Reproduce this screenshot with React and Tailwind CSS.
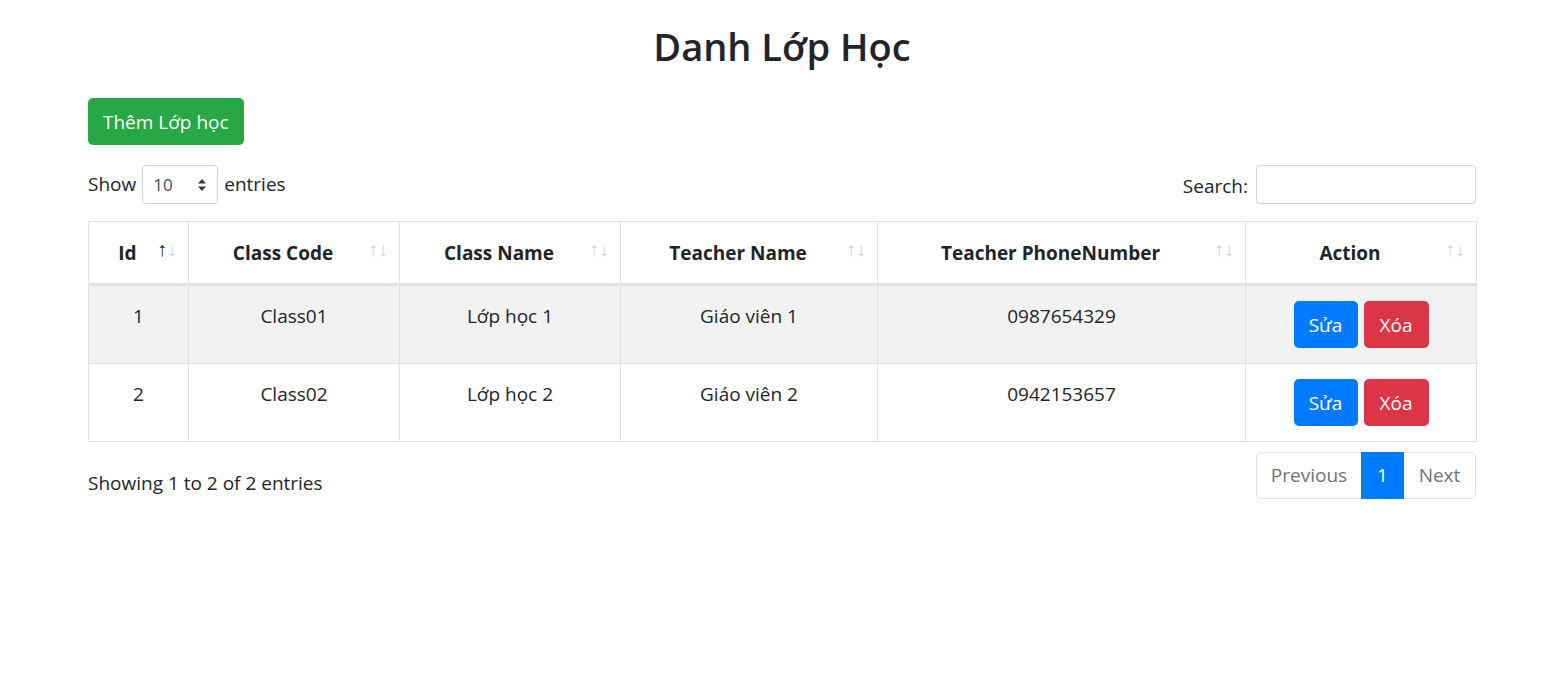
const columns = [
  { label: 'Id', width: 'w-[100px]', active: true },
  { label: 'Class Code', width: 'w-[211px]' },
  { label: 'Class Name', width: 'w-[221px]' },
  { label: 'Teacher Name', width: 'w-[257px]' },
  { label: 'Teacher PhoneNumber', width: 'w-[368px]' },
  { label: 'Action', width: 'w-[231px]' },
]

const classes = [
  { id: 1, code: 'Class01', name: 'Lớp học 1', teacher: 'Giáo viên 1', phone: '0987654329' },
  { id: 2, code: 'Class02', name: 'Lớp học 2', teacher: 'Giáo viên 2', phone: '0942153657' },
]

function SortIcons({ active }) {
  return (
    <span className="absolute right-[11px] top-[12px] flex text-[20px] leading-[30px] font-normal">
      <span className={active ? 'text-[#212529]' : 'text-[#d3d5d8]'}>↑</span>
      <span className="text-[#d3d5d8]">↓</span>
    </span>
  )
}

export default function App() {
  return (
    <div className="min-h-[680px] bg-white text-[#212529] font-['Open_Sans',sans-serif] text-[19px]">
      <div className="ml-[88px] w-[1388px] pt-[20px]">
        <h2 className="text-center text-[38px] font-semibold leading-[52px]">Danh Lớp Học</h2>

        <button className="mt-[26px] h-[47px] rounded-[5px] bg-[#28a745] px-[15px] text-[19px] leading-[30px] text-white">
          Thêm Lớp học
        </button>

        <div className="mt-[20px] flex items-start justify-between">
          <div className="flex items-center gap-[6px]">
            <span>Show</span>
            <div className="flex h-[39px] w-[76px] items-center justify-between rounded-[4px] border border-[#ced4da] px-[10px] text-[17px] text-[#495057]">
              <span>10</span>
              <svg width="10" height="14" viewBox="0 0 10 14">
                <path d="M5 1 L9 5.5 H1 Z M5 13 L9 8.5 H1 Z" fill="#343a40" />
              </svg>
            </div>
            <span>entries</span>
          </div>
          <div className="flex items-center gap-[8px]">
            <span className="mt-[4px]">Search:</span>
            <div className="h-[39px] w-[220px] rounded-[4px] border border-[#ced4da]" />
          </div>
        </div>

        <table className="mt-[17px] w-[1388px] table-fixed border-collapse border border-[#dee2e6]">
          <thead>
            <tr>
              {columns.map((col) => (
                <th
                  key={col.label}
                  className={`${col.width} relative border border-b-[3px] border-[#dee2e6] pl-[15px] pr-[37px] pt-[16px] pb-[15px] text-center font-bold leading-[30px]`}
                >
                  {col.label}
                  <SortIcons active={col.active} />
                </th>
              ))}
            </tr>
          </thead>
          <tbody>
            {classes.map((item, i) => (
              <tr key={item.id} className={i % 2 === 0 ? 'bg-[#f2f2f2]' : 'bg-white'}>
                <td className="border border-[#dee2e6] px-[15px] pt-[15px] pb-[15px] text-center align-top leading-[30px]">{item.id}</td>
                <td className="border border-[#dee2e6] px-[15px] pt-[15px] pb-[15px] text-center align-top leading-[30px]">{item.code}</td>
                <td className="border border-[#dee2e6] px-[15px] pt-[15px] pb-[15px] text-center align-top leading-[30px]">{item.name}</td>
                <td className="border border-[#dee2e6] px-[15px] pt-[15px] pb-[15px] text-center align-top leading-[30px]">{item.teacher}</td>
                <td className="border border-[#dee2e6] px-[15px] pt-[15px] pb-[15px] text-center align-top leading-[30px]">{item.phone}</td>
                <td className="border border-[#dee2e6] p-[15px] text-center align-top">
                  <div className="flex justify-center gap-[6px]">
                    <button className="h-[47px] w-[64px] rounded-[5px] bg-[#007bff] text-white leading-[30px]">Sửa</button>
                    <button className="h-[47px] w-[65px] rounded-[5px] bg-[#dc3545] text-white leading-[30px]">Xóa</button>
                  </div>
                </td>
              </tr>
            ))}
          </tbody>
        </table>

        <div className="mt-[10px] flex items-start justify-between">
          <span className="mt-[17px]">Showing 1 to 2 of 2 entries</span>
          <div className="flex h-[47px] rounded-[5px] border border-[#dee2e6] text-[#6c757d]">
            <span className="flex w-[104px] items-center justify-center">Previous</span>
            <span className="-my-px flex w-[43px] items-center justify-center bg-[#007bff] text-white">1</span>
            <span className="flex w-[71px] items-center justify-center">Next</span>
          </div>
        </div>
      </div>
    </div>
  )
}
